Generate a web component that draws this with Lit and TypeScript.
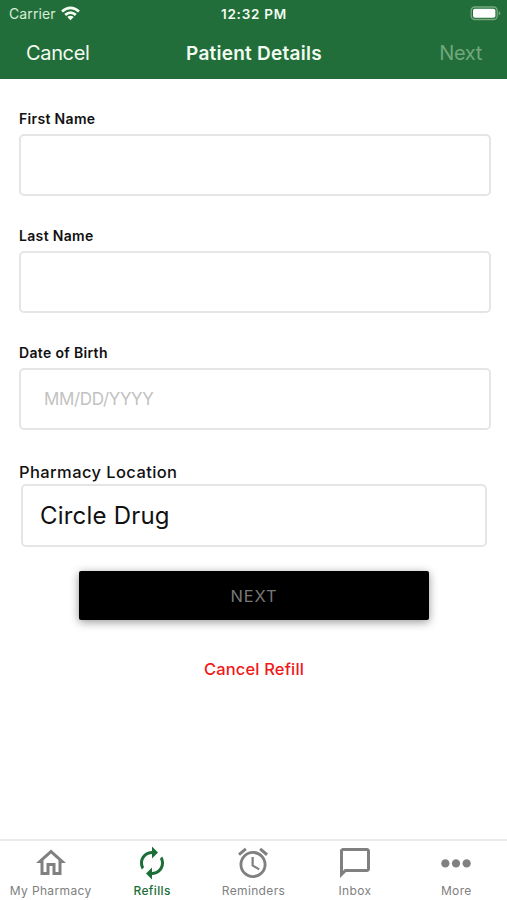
import { LitElement, html, css, svg } from "lit";
import { customElement } from "lit/decorators.js";
import { classMap } from "lit/directives/class-map.js";

const icons = {
  home: svg`<path d="M12 5.69l5 4.5V18h-2v-6H9v6H7v-7.81l5-4.5M12 3L2 12h3v8h6v-6h2v6h6v-8h3L12 3z"/>`,
  refills: svg`<path d="M12 6v3l4-4-4-4v3c-4.42 0-8 3.58-8 8 0 1.57.46 3.03 1.24 4.26L6.7 14.8A5.87 5.87 0 0 1 6 12c0-3.31 2.69-6 6-6zm6.76 1.74L17.3 9.2c.44.84.7 1.79.7 2.8 0 3.31-2.69 6-6 6v-3l-4 4 4 4v-3c4.42 0 8-3.58 8-8 0-1.57-.46-3.03-1.24-4.26z"/>`,
  reminders: svg`<path d="M22 5.72l-4.6-3.86-1.29 1.53 4.6 3.86L22 5.72zM7.88 3.39L6.6 1.86 2 5.71l1.29 1.53 4.59-3.85zM12.5 8H11v6l4.75 2.85.75-1.23-4-2.37V8zM12 4a9 9 0 1 0 0 18 9 9 0 0 0 0-18zm0 16.1a7.1 7.1 0 1 1 0-14.2 7.1 7.1 0 0 1 0 14.2z"/>`,
  inbox: svg`<path d="M20 2H4c-1.1 0-2 .9-2 2v18l4-4h14c1.1 0 2-.9 2-2V4c0-1.1-.9-2-2-2zm0 14H5.2L4 17.2V4h16v12z"/>`,
  more: svg`<circle cx="4.9" cy="12.3" r="2.75"/><circle cx="12" cy="12.3" r="2.75"/><circle cx="19.1" cy="12.3" r="2.75"/>`,
};

const tabs = [
  { label: "My Pharmacy", icon: icons.home },
  { label: "Refills", icon: icons.refills, active: true },
  { label: "Reminders", icon: icons.reminders },
  { label: "Inbox", icon: icons.inbox },
  { label: "More", icon: icons.more },
];

@customElement("app-root")
export class AppRoot extends LitElement {
  static styles = css`
    :host {
      display: flex;
      flex-direction: column;
      width: 100%;
      height: 900px;
      overflow: hidden;
      background: #fff;
      color: #111;
      font-family: Inter, "Liberation Sans", sans-serif;
    }
    * { box-sizing: border-box; }
    .header {
      height: 79px;
      flex: none;
      background: #216e3a;
      color: #f2fbf0;
    }
    .status, .nav {
      display: grid;
      grid-template-columns: 1fr auto 1fr;
      align-items: center;
    }
    .status { height: 27px; padding: 0 6px 0 9px; }
    .carrier { display: flex; align-items: center; gap: 5px; font-size: 14px; letter-spacing: 0.1px; color: #d9eed6; }
    .wifi { width: 19px; height: 15px; margin-top: -1px; }
    .time { margin-left: -2px; font-size: 13.5px; font-weight: 600; letter-spacing: 0.75px; }
    .battery { justify-self: end; width: 31px; height: 15px; }
    .nav { height: 52px; padding: 0 25px 0 26px; font-size: 20px; letter-spacing: -0.35px; }
    .title { font-size: 19px; font-weight: 600; letter-spacing: 0.25px; }
    .next { justify-self: end; color: #72a77c; }
    .form { flex: 1; padding: 30px 16px 0 19px; }
    .field { height: 117px; }
    .label { height: 25px; line-height: 20px; font-size: 14px; font-weight: 600; letter-spacing: 0.33px; }
    .input {
      display: block;
      width: 100%;
      height: 62px;
      border: 2px solid #e5e5e5;
      border-radius: 5px;
      padding: 0 23px;
      background: #fff;
      font: 400 17px Inter, sans-serif;
      letter-spacing: -0.35px;
      outline: none;
    }
    .input::placeholder { color: #c2c2c2; opacity: 1; }
    .location-label { height: 24px; line-height: 24px; font-size: 16.5px; font-weight: 500; letter-spacing: 0.4px; }
    .location {
      display: flex;
      align-items: center;
      height: 63px;
      margin: 0 4px 0 2px;
      padding: 0 17px;
      border: 2px solid #e5e5e5;
      border-radius: 5px;
      font-size: 24px;
      letter-spacing: 0.2px;
    }
    .submit {
      display: block;
      width: 350px;
      height: 49px;
      margin: 24px auto 0 60px;
      border: 0;
      border-radius: 2px;
      background: #000;
      color: #777;
      font: 400 16.5px Inter, sans-serif;
      letter-spacing: 0.9px;
      box-shadow: 0 2px 10px rgba(0, 0, 0, 0.42);
    }
    .cancel-refill {
      margin: 37px 0 0 -2px;
      line-height: 24px;
      text-align: center;
      color: #f01818;
      font-size: 16.5px;
      font-weight: 500;
      letter-spacing: 0.15px;
    }
    .tabs {
      flex: none;
      display: grid;
      grid-template-columns: repeat(5, 1fr);
      height: 61px;
      border-top: 2px solid #ebebeb;
      background: #fff;
    }
    .tab {
      display: flex;
      flex-direction: column;
      align-items: center;
      padding-top: 4px;
      color: #808080;
      font-size: 12px;
      line-height: 16px;
      letter-spacing: 0.35px;
      white-space: nowrap;
    }
    .active { color: #1c6e38; font-weight: 500; }
    .icon { width: 36px; height: 36px; fill: currentColor; margin-bottom: 2px; }
  `;

  private field(label: string, placeholder = "") {
    return html`<div class="field">
      <div class="label">${label}</div>
      <input class="input" aria-label=${label} placeholder=${placeholder} />
    </div>`;
  }

  render() {
    return html`
      <div class="header">
        <div class="status">
          <div class="carrier">
            <span>Carrier</span>
            <svg class="wifi" viewBox="0 0 19 15">
              <g fill="none" stroke="#f4fff2" stroke-width="2.7">
                <path d="M1 5.5Q9.5 -1.7 18 5.5" />
                <path d="M4.2 8.9Q9.5 4.4 14.8 8.9" />
              </g>
              <path fill="#f4fff2" d="M6.3 11Q9.5 8.4 12.7 11L9.5 14.3z" />
            </svg>
          </div>
          <div class="time">12:32 PM</div>
          <svg class="battery" viewBox="0 0 31 15">
            <rect x="1.2" y="1" width="26" height="12.5" rx="3.6" fill="none" stroke="#78a981" stroke-width="1.3" />
            <rect x="3" y="2.8" width="22.4" height="8.9" rx="1.8" fill="#fff" />
            <path d="M28.7 5q1.6.8 1.6 2.3t-1.6 2.3z" fill="#78a981" />
          </svg>
        </div>
        <div class="nav">
          <div>Cancel</div>
          <div class="title">Patient Details</div>
          <div class="next">Next</div>
        </div>
      </div>
      <div class="form">
        ${this.field("First Name")} ${this.field("Last Name")}
        ${this.field("Date of Birth", "MM/DD/YYYY")}
        <div class="location-label">Pharmacy Location</div>
        <div class="location">Circle Drug</div>
        <button class="submit">NEXT</button>
        <div class="cancel-refill">Cancel Refill</div>
      </div>
      <div class="tabs">
        ${tabs.map(
          (t) => html`<div class=${classMap({ tab: true, active: !!t.active })}>
            <svg class="icon" viewBox="0 0 24 24">${t.icon}</svg>
            <span>${t.label}</span>
          </div>`
        )}
      </div>
    `;
  }
}
